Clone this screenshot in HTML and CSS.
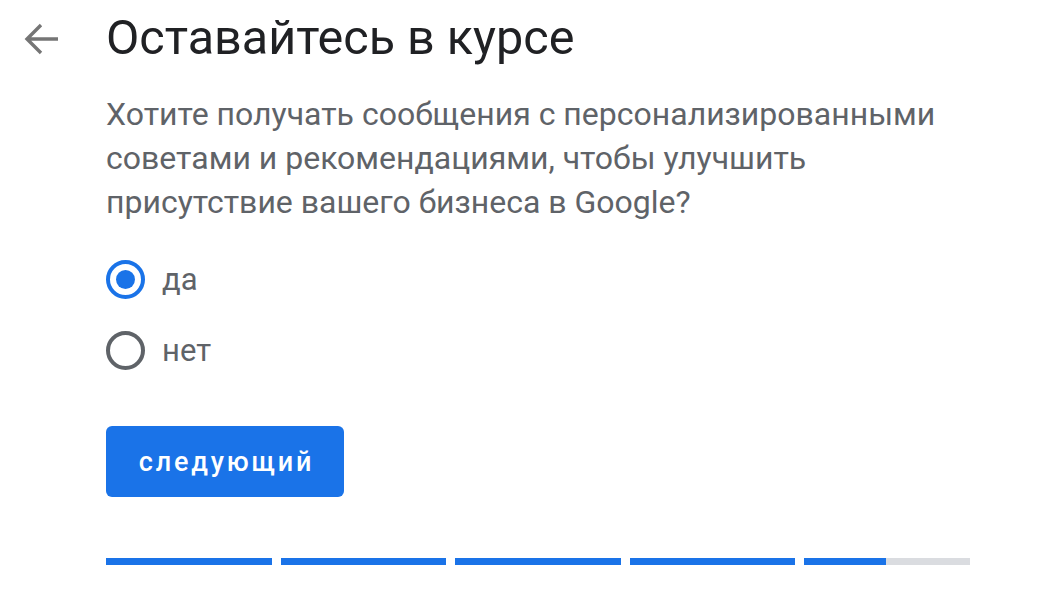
FILE: index.html
```html
<!DOCTYPE html>
<html lang="ru">
<head>
<meta charset="utf-8">
<link rel="stylesheet" href="styles.css">
</head>
<body>
<div class="page">
  <header class="header">
    <button class="back" aria-label="Назад">
      <svg width="36" height="34" viewBox="0 0 36 34"><path d="M35 17H4M18 3L4 17l14 14" fill="none" stroke="#757575" stroke-width="3.4"/></svg>
    </button>
    <h1 class="title">Оставайтесь в курсе</h1>
  </header>
  <main class="content">
    <p class="question">Хотите получать сообщения с персонализированными советами и рекомендациями, чтобы улучшить присутствие вашего бизнеса в Google?</p>
    <div class="options">
      <label class="option"><span class="radio checked"></span><span class="label">да</span></label>
      <label class="option"><span class="radio"></span><span class="label">нет</span></label>
    </div>
    <button class="next">следующий</button>
    <div class="progress">
      <div class="seg"><div class="fill" style="width:100%"></div></div>
      <div class="seg"><div class="fill" style="width:100%"></div></div>
      <div class="seg"><div class="fill" style="width:100%"></div></div>
      <div class="seg"><div class="fill" style="width:100%"></div></div>
      <div class="seg"><div class="fill" style="width:49%"></div></div>
    </div>
  </main>
</div>
</body>
</html>
```
FILE: styles.css
```css
html, body {
  margin: 0;
  padding: 0;
  background: #fff;
}
body {
  font-family: Roboto, "Noto Sans", Arial, sans-serif;
  width: 1048px;
  height: 612px;
  overflow: hidden;
}
.page {
  padding-top: 13px;
}
.header {
  display: flex;
  align-items: center;
  height: 50px;
}
.back {
  margin-left: 23px;
  width: 36px;
  height: 34px;
  padding: 0;
  border: 0;
  background: none;
  display: flex;
  align-items: center;
  justify-content: center;
  position: relative;
  top: 1px;
}
.title {
  margin: 0 0 0 47px;
  font-size: 48.5px;
  font-weight: 400;
  color: #202124;
  line-height: 50px;
}
.content {
  margin-left: 106px;
  width: 864px;
}
.question {
  margin: 29px 0 0;
  font-size: 32px;
  line-height: 44px;
  color: #5f6368;
}
.options {
  margin-top: 36px;
  display: flex;
  flex-direction: column;
  gap: 33px;
}
.option {
  display: flex;
  align-items: center;
  gap: 17px;
  height: 38px;
}
.radio {
  box-sizing: border-box;
  width: 39px;
  height: 39px;
  border: 4px solid #5f6368;
  border-radius: 50%;
  display: flex;
  align-items: center;
  justify-content: center;
}
.radio.checked {
  border-color: #1a73e8;
}
.radio.checked::after {
  content: "";
  width: 19px;
  height: 19px;
  border-radius: 50%;
  background: #1a73e8;
}
.label {
  font-size: 31px;
  color: #5f6368;
}
.next {
  margin-top: 57px;
  width: 238px;
  height: 71px;
  border: 0;
  border-radius: 6px;
  background: #1a73e8;
  color: #fff;
  font-family: Roboto, "Noto Sans", sans-serif;
  font-size: 27px;
  font-weight: 500;
  letter-spacing: 2.8px;
  padding: 0 0 0 3px;
}
.progress {
  margin-top: 61px;
  display: flex;
  gap: 9px;
}
.seg {
  flex: 1;
  height: 7px;
  background: #dadce0;
}
.fill {
  height: 100%;
  background: #1a73e8;
}
```
